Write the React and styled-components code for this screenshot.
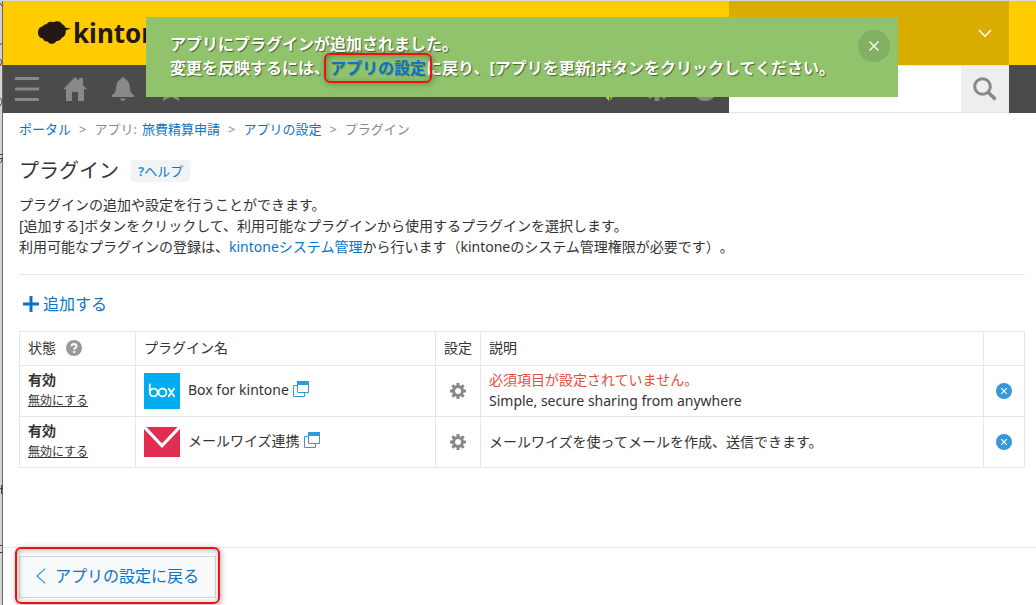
import React from "react";
import styled, { createGlobalStyle } from "styled-components";

const plugins = [
  {
    id: "box",
    name: "Box for kintone",
    error: "必須項目が設定されていません。",
    description: "Simple, secure sharing from anywhere",
  },
  {
    id: "mailwise",
    name: "メールワイズ連携",
    description: "メールワイズを使ってメールを作成、送信できます。",
  },
];

const logos = { box: BoxLogo, mailwise: MailwiseLogo };

function App() {
  return (
    <>
      <GlobalStyle />
      <Window>
        <Edge>
          <svg width="3" height="605" viewBox="0 0 3 605" fill="none" stroke="#444">
            <path d="M0 2l2 3M0 44l2-2M0 58q3 2 0 7M0 97q4 3 0 8M0 153.500h3M0 157.500h3M2 158q0 3-2 4M0 487.500h3M1.500 484v9M0 544.500h2M0 551.500h3" />
          </svg>
        </Edge>
        <Header>
          <Brand href="#">
            <CloudLogo />
            kintone
          </Brand>
          <UserMenu aria-label="ユーザーメニュー">
            <svg width="14" height="9" viewBox="0 0 14 9" fill="none" stroke="#fff" strokeWidth="1.6">
              <path d="M1 1l6 6.200L13 1" />
            </svg>
          </UserMenu>
        </Header>
        <Toolbar>
          <ToolGroup>
            <ToolButton aria-label="メニュー">
              <svg width="24" height="24" viewBox="0 0 24 24" fill="#888">
                <path d="M0 0h24v3H0zM0 10.500h24v3H0zM0 21h24v3H0z" />
              </svg>
            </ToolButton>
            <ToolButton aria-label="ポータル">
              <svg width="24" height="24" viewBox="0 0 24 24" fill="#888">
                <path d="M12 0l4 4V1h4v7l4 4.200H21V24h-6v-9H9v9H3V12.200H0z" />
              </svg>
            </ToolButton>
            <ToolButton aria-label="通知">
              <svg width="24" height="24" viewBox="0 0 24 24" fill="#888">
                <path d="M12 0c1 0 1.700.8 1.700 1.700C17 3 18.600 6 19 11c.3 4 1.500 5.500 4 7v2H1v-2c2.500-1.500 3.700-3 4-7 .4-5 2-8 5.300-9.300C10.300.8 11 0 12 0zM9 21.500h6c-.6 1.500-1.500 2.300-3 2.300s-2.400-.8-3-2.300z" />
              </svg>
            </ToolButton>
            <ToolButton aria-label="ブックマーク">
              <svg width="24" height="24" viewBox="0 0 24 24" fill="#888">
                <path d="M12 0l3 9h9l-6.500 5.500L20.500 24 12 20 3.500 24l3-9.500L0 9h9z" />
              </svg>
            </ToolButton>
          </ToolGroup>
          <ToolGroup $end>
            <ToolButton aria-label="更新情報">
              <svg width="24" height="24" viewBox="0 0 24 24">
                <path d="M2 12h10v12z" fill="#fc0" />
                <path d="M13 24V12h10z" fill="#73a657" />
              </svg>
            </ToolButton>
            <ToolButton aria-label="設定">
              <Gear size={24} />
            </ToolButton>
            <ToolButton aria-label="ヘルプ">
              <svg width="24" height="24" viewBox="0 0 24 24">
                <circle cx="12" cy="12" r="12" fill="#888" />
              </svg>
            </ToolButton>
          </ToolGroup>
          <Search role="search">
            <SearchInput type="text" aria-label="検索" />
            <SearchButton aria-label="検索する">
              <svg width="24" height="24" viewBox="0 0 24 24" fill="none" stroke="#888" strokeWidth="3">
                <circle cx="9.500" cy="9.500" r="7.800" />
                <path d="M15 15l7.500 7.500" strokeWidth="3.600" />
              </svg>
            </SearchButton>
          </Search>
        </Toolbar>

        <Notice role="status">
          <div>
            アプリにプラグインが追加されました。
            <br />
            変更を反映するには、
            <NoticeLink href="#">
              アプリの設定
              <Marker />
            </NoticeLink>
            に戻り、[アプリを更新]ボタンをクリックしてください。
          </div>
          <NoticeClose aria-label="閉じる">
            <svg width="10" height="10" viewBox="0 0 10 10" stroke="#fff" strokeWidth="1.300">
              <path d="M.5.5l9 9M9.500.5l-9 9" />
            </svg>
          </NoticeClose>
        </Notice>

        <Main>
          <Breadcrumb>
            <a href="#">ポータル</a>
            <span>&gt;</span>
            <AppCrumb>
              アプリ:<a href="#">旅費精算申請</a>
            </AppCrumb>
            <span>&gt;</span>
            <a href="#">アプリの設定</a>
            <span>&gt;</span>
            <span>プラグイン</span>
          </Breadcrumb>
          <TitleRow>
            <Title>プラグイン</Title>
            <HelpLink href="#">
              <b>?</b>ヘルプ
            </HelpLink>
          </TitleRow>
          <Lead>
            プラグインの追加や設定を行うことができます。
            <br />
            [追加する]ボタンをクリックして、利用可能なプラグインから使用するプラグインを選択します。
            <br />
            利用可能なプラグインの登録は、<a href="#">kintoneシステム管理</a>
            から行います（kintoneのシステム管理権限が必要です）。
          </Lead>
          <AddButton>
            <svg width="16" height="16" viewBox="0 0 16 16" fill="#0b74c4">
              <path d="M6.500 0h3v6.500H16v3H9.500V16h-3V9.500H0v-3h6.500z" />
            </svg>
            追加する
          </AddButton>
          <Table>
            <thead>
              <tr>
                <HeadCell $width="116px">
                  <StateLabel>
                    状態
                    <HelpIcon />
                  </StateLabel>
                </HeadCell>
                <HeadCell $width="300px">プラグイン名</HeadCell>
                <HeadCell $width="45px">設定</HeadCell>
                <HeadCell>説明</HeadCell>
                <HeadCell $width="41px" aria-label="削除" />
              </tr>
            </thead>
            <tbody>
              {plugins.map((plugin) => {
                const Logo = logos[plugin.id];
                return (
                  <tr key={plugin.id}>
                    <Cell $text>
                      <State>有効</State>
                      <DisableButton>無効にする</DisableButton>
                    </Cell>
                    <Cell>
                      <PluginName>
                        <Logo />
                        <span>{plugin.name}</span>
                        <WindowIcon />
                      </PluginName>
                    </Cell>
                    <Cell>
                      <IconButton aria-label={`${plugin.name}の設定`}>
                        <Gear size={16} />
                      </IconButton>
                    </Cell>
                    <Cell $text>
                      {plugin.error && <ErrorText>{plugin.error}</ErrorText>}
                      <div>{plugin.description}</div>
                    </Cell>
                    <Cell>
                      <IconButton aria-label={`${plugin.name}を削除`}>
                        <svg width="16" height="16" viewBox="0 0 16 16">
                          <circle cx="8" cy="8" r="8" fill="#3498db" />
                          <path d="M5.200 5.200l5.600 5.600M10.800 5.200l-5.600 5.600" stroke="#fff" strokeWidth="1.100" />
                        </svg>
                      </IconButton>
                    </Cell>
                  </tr>
                );
              })}
            </tbody>
          </Table>
        </Main>

        <Footer>
          <BackButton>
            <svg width="10" height="16" viewBox="0 0 10 16" fill="none" stroke="#3498db" strokeWidth="1.200">
              <path d="M9.300.6L1 8l8.300 7.400" />
            </svg>
            アプリの設定に戻る
            <Marker $wide />
          </BackButton>
        </Footer>
      </Window>
    </>
  );
}

function CloudLogo() {
  return (
    <svg width="33" height="24" viewBox="0 0 33 24" fill="#231815">
      <path d="M8.500 3.200C10 .9 13 .2 15.500 1.200c3-1.800 7.500-1 9 2.400 1.500.5 2.600 1.800 3 3.200l5.500.8-5.300 1.600c.4 3.200-.7 6.500-3.700 7.300-1 2.500-3.600 3.700-5.500 3.400C16 23.400 12 24 9.500 20.500 7.300 21 5.500 19.500 5 17.500 1.500 17 0 14.500 0 11.500 0 8 2 6 4.500 5.600 5 4.200 6.800 3 8.500 3.200z" />
    </svg>
  );
}

function Gear({ size }) {
  return (
    <svg width={size} height={size} viewBox="0 0 16 16">
      <path
        fill="none"
        stroke="#888"
        strokeWidth="3"
        d="M8 0v4M8 12v4M0 8h4M12 8h4M2.300 2.300l3 3M10.700 10.700l3 3M2.300 13.700l3-3M10.700 5.300l3-3"
      />
      <circle cx="8" cy="8" r="4.500" fill="none" stroke="#888" strokeWidth="3" />
    </svg>
  );
}

function BoxLogo() {
  return (
    <svg width="36" height="36" viewBox="0 0 36 36" fill="none" stroke="#fff" strokeWidth="1.800" strokeLinecap="round">
      <path fill="#00aeef" stroke="none" d="M0 0h36v36H0z" />
      <path d="M5.800 11.500v8" />
      <circle cx="9.700" cy="19.500" r="3.900" />
      <circle cx="18.500" cy="19.500" r="3.900" />
      <path d="M24.700 15.800l5.300 7.400M30 15.800l-5.300 7.400" />
    </svg>
  );
}

function MailwiseLogo() {
  return (
    <svg width="36" height="36" viewBox="0 0 36 36">
      <path fill="#e02d50" d="M2.500 3h31L18 19.500zM0 5l18 19L36 5v28H0z" />
    </svg>
  );
}

function HelpIcon() {
  return (
    <svg width="16" height="16" viewBox="0 0 16 16" fill="none">
      <circle cx="8" cy="8" r="8" fill="#999" />
      <path d="M5.600 6.300c0-3.200 4.900-3.100 4.900-.2 0 1.800-2.300 1.700-2.300 3.700" stroke="#fff" strokeWidth="2" />
      <path d="M7.200 11h2v2h-2z" fill="#fff" />
    </svg>
  );
}

function WindowIcon() {
  return (
    <svg width="16" height="16" viewBox="0 0 16 16" fill="none" stroke="#3498db">
      <path d="M4 4.500H.5v11h11V12" />
      <path d="M4.500.5h11v11h-11z" />
      <path d="M4 0h12v4H4z" fill="#3498db" stroke="none" />
    </svg>
  );
}

const GlobalStyle = createGlobalStyle`
  * {
    box-sizing: border-box;
  }
  body {
    margin: 0;
    background: #fff;
    color: #333;
    font: 14px/21px "Noto Sans", "Noto Sans CJK JP", sans-serif;
    text-spacing-trim: space-all;
  }
  button, input {
    margin: 0;
    padding: 0;
    border: 0;
    background: none;
    color: inherit;
    font: inherit;
  }
  button {
    cursor: pointer;
  }
  a {
    color: #0b74c4;
    text-decoration: none;
  }
  svg {
    display: block;
    flex: none;
  }
`;

const Window = styled.div`
  position: relative;
  min-height: 100vh;
  padding-left: 3px;
  border-top: 1px solid #d5d9dc;
  overflow: hidden;
`;

/* sliver of the window behind */
const Edge = styled.div`
  position: absolute;
  top: 0;
  bottom: 0;
  left: 0;
  width: 3px;
  border-right: 1px solid #666;
  background: #d4d4d4;
`;

const Header = styled.header`
  display: flex;
  justify-content: space-between;
  height: 64px;
  padding: 0 27px 0 35px;
  background: #fc0;
`;

const Brand = styled.a`
  display: flex;
  align-items: center;
  gap: 2px;
  color: #231815;
  font-size: 26px;
  font-weight: 700;
`;

const UserMenu = styled.button`
  display: flex;
  align-items: center;
  justify-content: flex-end;
  width: 280px;
  padding-right: 17px;
  background: #d9ad00;
`;

const Toolbar = styled.nav`
  display: flex;
  height: 48px;
  padding: 0 27px 0 12px;
  background: #4b4b4b;
`;

const ToolGroup = styled.div`
  display: flex;
  align-items: center;
  gap: 24px;
  margin-left: ${(props) => (props.$end ? "auto" : "0")};
  padding-right: ${(props) => (props.$end ? "12px" : "0")};
`;

const ToolButton = styled.button`
  width: 24px;
  height: 24px;
`;

const Search = styled.form`
  display: flex;
  width: 280px;
  border: 1px solid #e3e7e8;
  border-width: 1px 0;
  background: #fff;
`;

const SearchInput = styled.input`
  flex: 1;
  min-width: 0;
  padding: 0 12px;
`;

const SearchButton = styled.button`
  display: flex;
  align-items: center;
  justify-content: center;
  width: 48px;
  background: #eee;
`;

const Notice = styled.div`
  position: absolute;
  top: 16px;
  left: 146px;
  right: 138px;
  display: flex;
  justify-content: space-between;
  align-items: flex-start;
  height: 80px;
  padding: 13px 8px 16px 24px;
  background: #91c36c;
  color: #fff;
  font-size: 16px;
  font-weight: 700;
  line-height: 24px;
  text-shadow: 1px 1px 1px rgba(0, 0, 0, 0.5);

  > div {
    padding-top: 2px;
  }
`;

const NoticeLink = styled.a`
  position: relative;
  text-shadow: 1px 1px 1px rgba(0, 0, 0, 0.2);
`;

const NoticeClose = styled.button`
  display: flex;
  flex: none;
  align-items: center;
  justify-content: center;
  width: 32px;
  height: 32px;
  border-radius: 50%;
  background: #82af61;
`;

/* red frame laid round a control */
const Marker = styled.span`
  position: absolute;
  inset: ${(props) => (props.$wide ? "-10px -5px -7px" : "-4px -6px")};
  border: 2px solid #ed1111;
  border-radius: 6px;
  box-shadow: 1px 1px 6px rgba(0, 0, 0, 0.3), inset 1px 1px 6px rgba(0, 0, 0, 0.3);
  pointer-events: none;
`;

const Main = styled.main`
  padding: 6px 11px 0 16px;
`;

const Breadcrumb = styled.nav`
  display: flex;
  gap: 8px;
  color: #888;
  font-size: 13px;
`;

const AppCrumb = styled.span`
  display: flex;
  gap: 5px;
`;

const TitleRow = styled.div`
  display: flex;
  align-items: center;
  gap: 12px;
  margin-top: 16px;
`;

const Title = styled.h1`
  margin: 0;
  font-size: 20px;
  font-weight: 400;
  line-height: 30px;
`;

const HelpLink = styled.a`
  padding: 0 7px;
  border-radius: 4px;
  background: #f1f3f5;
  font-size: 13px;
  line-height: 22px;

  b {
    color: #3498db;
  }
`;

const Lead = styled.p`
  margin: 8px 0 0;
  padding-bottom: 17px;
  border-bottom: 1px solid #e3e7e8;
`;

const AddButton = styled.button`
  display: flex;
  align-items: center;
  gap: 4px;
  margin: 17px 4px 15px;
  color: #0b74c4;
  font-size: 16px;
  line-height: 24px;
`;

const Table = styled.table`
  width: 100%;
  border-collapse: collapse;
  table-layout: fixed;
`;

const HeadCell = styled.th`
  width: ${(props) => props.$width || "auto"};
  height: 34px;
  padding: 0 8px 2px;
  border: 1px solid #e3e7e8;
  font-weight: 400;
  text-align: left;
  white-space: nowrap;
`;

const StateLabel = styled.span`
  display: flex;
  align-items: center;
  gap: 10px;
`;

const Cell = styled.td`
  height: 51px;
  padding: ${(props) => (props.$text ? "3px 8px 5px" : "4px 8px")};
  border: 1px solid #e3e7e8;
  vertical-align: middle;
`;

const State = styled.div`
  font-weight: 700;
`;

const DisableButton = styled.button`
  display: block;
  font-size: 12px;
  line-height: 21px;
  text-decoration: underline;
`;

const PluginName = styled.div`
  display: flex;
  align-items: center;

  span {
    margin: 0 4px 0 8px;
    padding-bottom: 4px;
  }
  span + svg {
    margin-bottom: 4px;
  }
`;

const IconButton = styled.button`
  display: block;
  width: 16px;
  height: 16px;
  margin: 0 auto;
`;

const ErrorText = styled.div`
  color: #e74c3c;
`;

const Footer = styled.footer`
  display: flex;
  margin-top: 79px;
  padding: 8px 16px 6px;
  border-top: 1px solid #e3e7e8;
`;

const BackButton = styled.button`
  position: relative;
  display: flex;
  align-items: center;
  gap: 9px;
  height: 42px;
  padding: 0 16px 2px;
  border: 1px solid #d5d9dc;
  background: #f7f9fa;
  color: #0b74c4;
  font-size: 16px;
`;

export default App;
